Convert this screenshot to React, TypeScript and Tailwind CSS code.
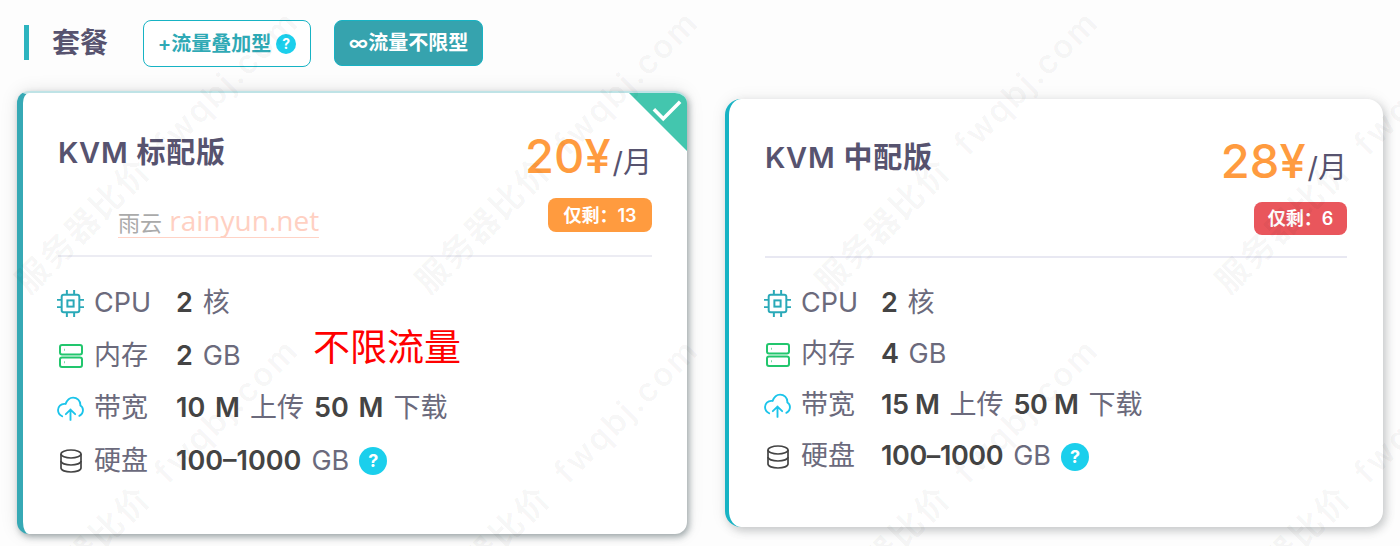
const cjk = "font-['Inter','Noto_Sans_CJK_SC',sans-serif]";

const watermarks = [0, 400, 800, 1200].flatMap((x) =>
    [-176, 152, 480].map((y) => ({ x: x + 157, y })),
);

function Help({ big }: { big?: boolean }) {
    return (
        <span
            className={`inline-flex items-center justify-center rounded-full bg-[#1bcfec] font-bold text-white ${
                big ? 'size-7 text-lg' : 'size-5 text-sm'
            }`}
        >
            ?
        </span>
    );
}

function CpuIcon() {
    return (
        <svg viewBox="0 0 26 26" className="-ml-[1px] size-[27px]" fill="none" stroke="#2aa9b8" strokeWidth="1.9">
            <rect x="4.500" y="4.500" width="17" height="17" rx="2" />
            <rect x="10" y="10" width="6" height="6" />
            <path d="M9.500 0v4.500M16.500 0v4.500M9.500 21.500V26M16.500 21.500V26M0 9.500h4.500M0 16.500h4.500M21.500 9.500H26M21.500 16.500H26" />
        </svg>
    );
}

function ServerIcon() {
    return (
        <svg viewBox="0 0 26 26" className="size-[26px]" fill="none" stroke="#22c66d" strokeWidth="2">
            <rect x="2" y="2" width="22" height="9.500" rx="2" />
            <rect x="2" y="14.500" width="22" height="9.500" rx="2" />
            <path d="M6 6.700h.6M6 19.200h.6" />
        </svg>
    );
}

function CloudIcon() {
    return (
        <svg viewBox="0 0 26 24" className="-ml-[1px] h-[25px] w-[27px]" fill="none" stroke="#1bc4ea" strokeWidth="1.800" strokeLinecap="round" strokeLinejoin="round">
            <path d="M5 19.500C2.600 18.300 1 16 1 13.500 1 10.200 3.700 7.500 7 7.500c.5 0 .9 0 1.300.1C9.600 4 12.300 1.500 15.500 1.500c3.900 0 7 3.100 7 7v.6c1.600.9 2.500 2.600 2.500 4.400 0 2.300-1.300 4.500-3.500 5.600" />
            <path d="M13 23v-10M8.500 17.500l4.500-4.500 4.500 4.500" />
        </svg>
    );
}

function DiskIcon() {
    return (
        <svg viewBox="0 0 26 26" className="size-[26px]" fill="none" stroke="#444444" strokeWidth="1.700">
            <ellipse cx="13" cy="6" rx="10" ry="4" />
            <path d="M3 6v14c0 2.400 4.500 4 10 4s10-1.600 10-4V6" />
            <path d="M3 13c0 2.400 4.500 4 10 4s10-1.600 10-4" />
        </svg>
    );
}

function Row({ icon, label, children, tall }: { icon: React.ReactNode; label: string; children: React.ReactNode; tall?: boolean }) {
    return (
        <div className={`flex items-center text-[27px] text-[#6b6a7c] ${tall ? 'h-[52.6px]' : 'h-[51px]'}`}>
            <span className="flex w-[36px] shrink-0 items-center">{icon}</span>
            <span className={`shrink-0 ${tall ? 'w-[82px]' : 'w-[80px]'}`}>{label}</span>
            <div className={`flex items-center gap-[10px] whitespace-nowrap ${tall ? '[&_b]:[word-spacing:3px]' : '[&_b]:tracking-[-0.4px]'}`}>
                {children}
            </div>
        </div>
    );
}

function Strong({ children }: { children: React.ReactNode }) {
    return <b className="font-semibold text-[#444444]">{children}</b>;
}

function Specs({ mem, up, tall }: { mem: string; up: string; tall?: boolean }) {
    return (
        <div className="flex flex-col">
            <Row tall={tall} icon={<CpuIcon />} label="CPU">
                <Strong>2</Strong> 核
            </Row>
            <Row tall={tall} icon={<ServerIcon />} label="内存">
                <Strong>{mem}</Strong> GB
            </Row>
            <Row tall={tall} icon={<CloudIcon />} label="带宽">
                <Strong>{up} M</Strong> 上传 <Strong>50 M</Strong> 下载
            </Row>
            <Row tall={tall} icon={<DiskIcon />} label="硬盘">
                <Strong>100–1000</Strong> GB <Help big />
            </Row>
        </div>
    );
}

function Price({ value }: { value: string }) {
    return (
        <div className="-mt-[2px] flex items-baseline">
            <span className="text-[47px] leading-none font-medium text-[#ff9b3f]">{value}¥</span>
            <span className="ml-[2px] text-[29px] leading-none text-[#57536f]">/月</span>
        </div>
    );
}

export default function App() {
    return (
        <div className={`relative h-[546px] w-[1400px] overflow-hidden bg-[#fdfdfd] ${cjk}`}>
            <div className="flex h-[91px] items-start pt-[20px] pl-[24px]">
                <span className="mt-[5px] h-[35px] w-[5px] bg-[#2db4bf]" />
                <h2 className="ml-[23px] text-[28px] leading-[46px] font-bold text-[#57536f]">套餐</h2>
                <button className="ml-[35px] flex h-[47px] w-[168px] items-center justify-center gap-[5px] rounded-lg border border-[#17b3c4] bg-white text-[20px] font-semibold text-[#2fa9b5]">
                    +流量叠加型 <Help />
                </button>
                <button className="ml-[23px] flex h-[46px] w-[149px] items-center justify-center rounded-lg border border-[#17b3c4] bg-[#36a3ae] text-[20px] font-semibold text-white">
                    ∞流量不限型
                </button>
            </div>

            <div className="flex items-start pl-[17px]">
                <div className="relative h-[443px] w-[670px] overflow-hidden rounded-xl border-t-2 border-l-[6px] border-t-[#bfe3e6] border-l-[#36a9b5] bg-white px-[35px] pt-[37px] shadow-[2px_3px_6px_rgba(60,80,85,0.45),0_0_18px_rgba(0,0,0,0.1)]">
                    <div className="absolute top-[-2px] right-0 h-[60px] w-[60px] bg-[#43c6ae] [clip-path:polygon(0_0,100%_0,100%_100%)]" />
                    <svg viewBox="0 0 32 24" className="absolute top-[6px] right-[5px] w-[30px]" fill="none" stroke="#ffffff" strokeWidth="3.800">
                        <path d="M2 11l10 10L30 3" />
                    </svg>

                    <div className="flex h-[127px] items-start justify-between border-b-2 border-[#ececf3]">
                        <div>
                            <h3 className="text-[29px] leading-[46px] font-semibold tracking-wide text-[#57536f]">KVM 标配版</h3>
                            <div className="mt-[30px] ml-[60px] w-fit border-b border-[#ffd3c6] font-['Open_Sans','Noto_Sans_CJK_SC',sans-serif] text-[28px] leading-[29px] text-[#ffd0c2]">
                                <span className="text-[22px] text-[#aaaaaa]">雨云</span> rainyun.net
                            </div>
                        </div>
                        <div className="mt-[4px] flex flex-col items-end">
                            <Price value="20" />
                            <span className="mt-[19px] flex h-[34px] w-[104px] items-center justify-center rounded-lg bg-[#ff9b3f] text-[18px] font-semibold text-white">
                                仅剩：13
                            </span>
                        </div>
                    </div>

                    <div className="relative mt-[20px]">
                        <Specs mem="2" up="10" tall />
                        <span className="absolute top-[52px] left-[255px] text-[37px] leading-none text-[#ff0000]">不限流量</span>
                    </div>
                </div>

                <div className="mt-[8px] ml-[38px] h-[428px] w-[658px] rounded-2xl border-l-[4px] border-l-[#17b3c4] bg-white px-[36px] pt-[36px] shadow-[3px_4px_8px_rgba(70,80,85,0.25),0_0_16px_rgba(0,0,0,0.08)]">
                    <div className="flex h-[123px] items-start justify-between border-b-2 border-[#e8e8f2]">
                        <h3 className="text-[29px] leading-[46px] font-semibold tracking-wide text-[#57536f]">KVM 中配版</h3>
                        <div className="mt-[4px] flex flex-col items-end">
                            <Price value="28" />
                            <span className="mt-[18px] flex h-[33px] w-[93px] items-center justify-center rounded-lg bg-[#e9565c] text-[18px] font-semibold text-white">
                                仅剩：6
                            </span>
                        </div>
                    </div>
                    <div className="mt-[20px]">
                        <Specs mem="4" up="15" />
                    </div>
                </div>
            </div>

            <div className="pointer-events-none absolute inset-0">
                {watermarks.map((m) => (
                    <span
                        key={`${m.x}-${m.y}`}
                        className="absolute -translate-x-1/2 -translate-y-1/2 -rotate-45 text-[33px] font-semibold tracking-[2px] whitespace-nowrap text-black/[0.04]"
                        style={{ left: m.x, top: m.y }}
                    >
                        服务器比价&nbsp;&nbsp;fwqbj.com
                    </span>
                ))}
            </div>
        </div>
    );
}
